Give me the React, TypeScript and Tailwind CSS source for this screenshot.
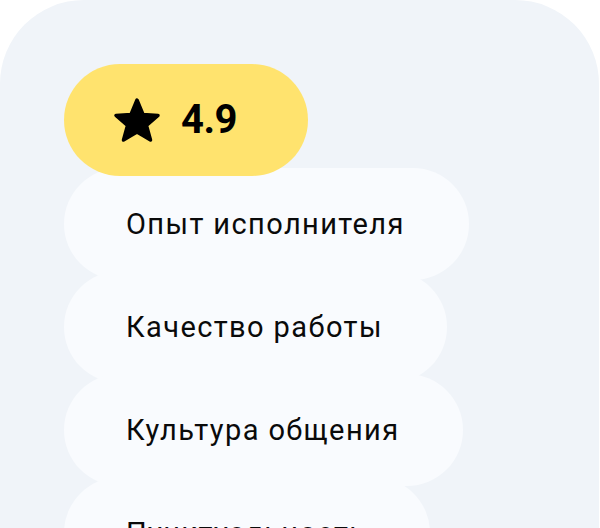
const ITEMS = [
  "Опыт исполнителя",
  "Качество работы",
  "Культура общения",
  "Пунктуальность",
];

function StarIcon() {
  // звезда с мягкими углами
  return (
    <svg viewBox="0 0 48 46" className="h-[46px] w-[48px]" aria-hidden>
      <path
        d="M24 3 L30 17.5 L45 18.5 L33.5 28.5 L37.5 43 L24 35 L10.5 43 L14.5 28.5 L3 18.5 L18 17.5 Z"
        fill="#000"
        stroke="#000"
        strokeWidth="3.5"
        strokeLinejoin="round"
      />
    </svg>
  );
}

export default function App() {
  return (
    <div className="h-[528px] w-[600px] overflow-hidden bg-white">
      <div className="h-[640px] w-[599px] rounded-[84px] bg-[#f0f4f9] pl-16 pt-16">
        {/* Рейтинг */}
        <div className="relative z-10 flex h-[112px] w-fit items-center gap-5 rounded-full bg-[#ffe36e] pl-[49px] pr-[71px]">
          <StarIcon />
          <span className="font-['Roboto',sans-serif] text-[40px] font-bold leading-none tracking-[-0.5px] text-black">
            4.9
          </span>
        </div>

        {/* Критерии */}
        <div className="-mt-2 flex flex-col items-start">
          {ITEMS.map((item, i) => (
            <div
              key={item}
              className={
                "flex h-[112px] w-fit items-center rounded-full bg-[#f9fbfe] pl-[62px] pr-[64px] " +
                (i > 0 ? "-mt-[9px]" : "")
              }
            >
              <span className="font-['Roboto',sans-serif] text-[29px] leading-none tracking-[1.4px] text-[#0a0a0a]">
                {item}
              </span>
            </div>
          ))}
        </div>
      </div>
    </div>
  );
}
